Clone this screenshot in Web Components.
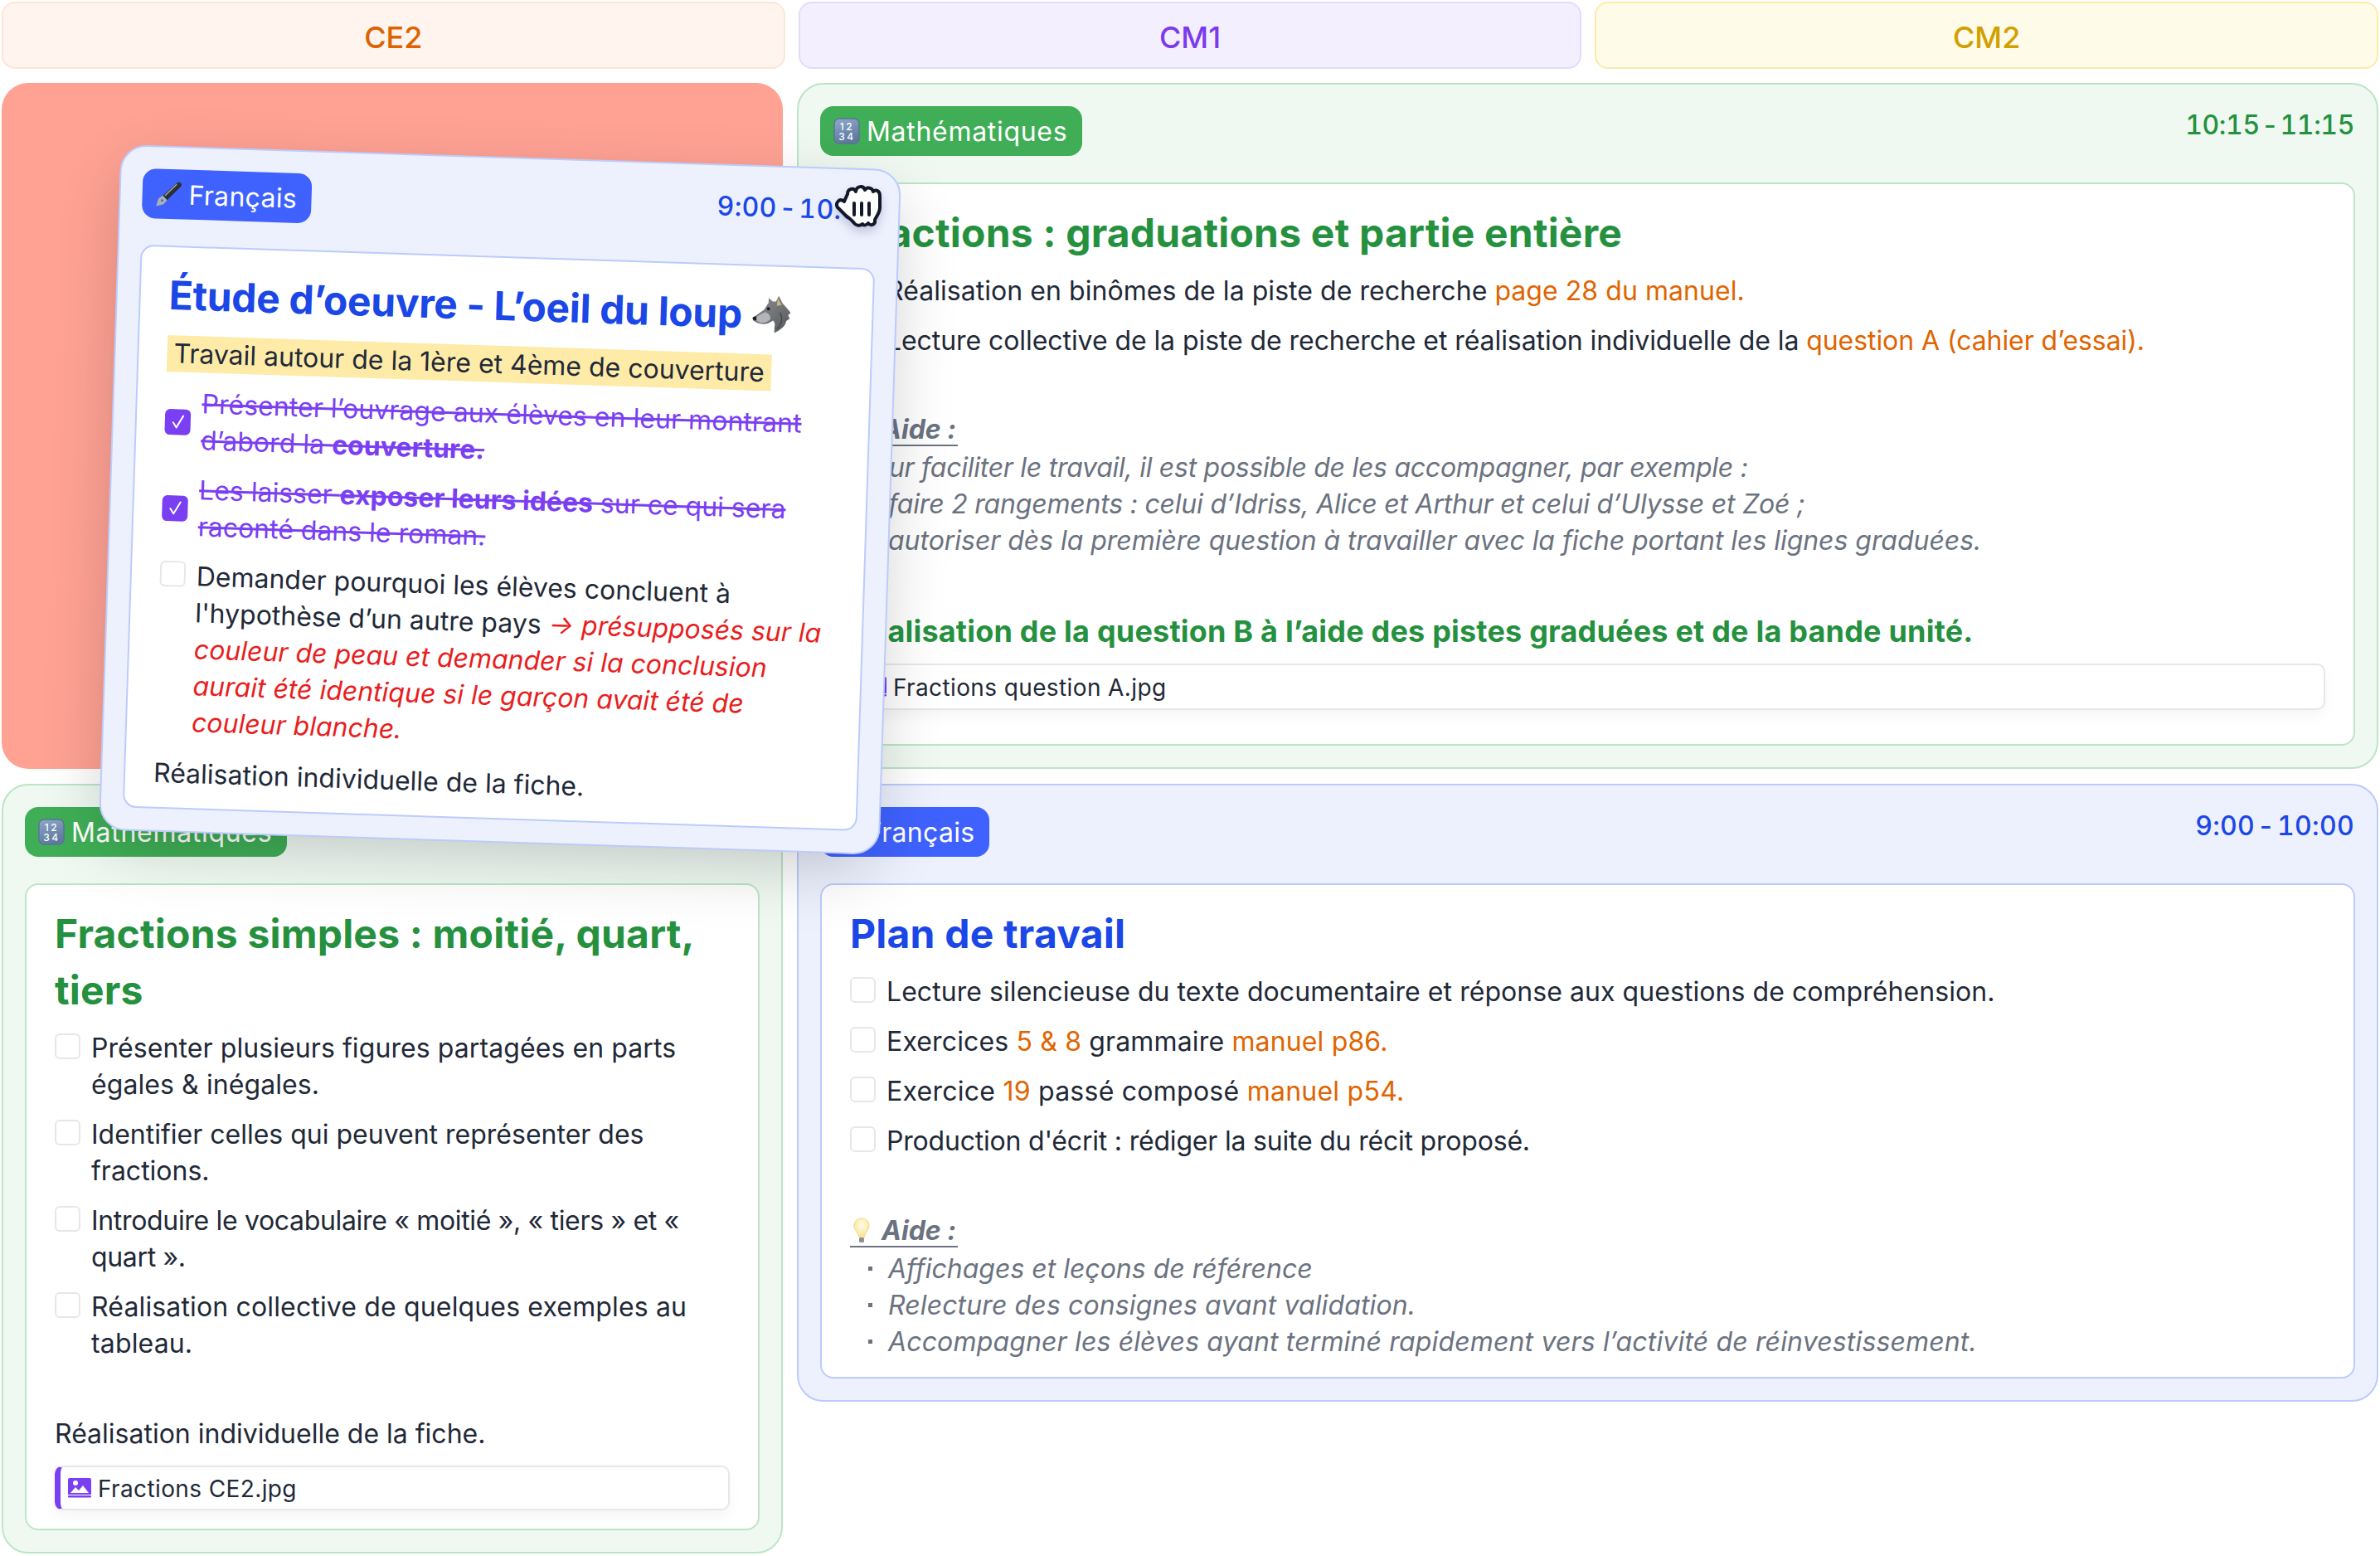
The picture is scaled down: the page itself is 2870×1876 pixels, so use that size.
<!doctype html>
<html lang="fr"><head><meta charset="utf-8"><title>Planning</title>
<style>
html,body{margin:0;background:#fff}
body{width:2870px;height:1876px;overflow:hidden;font:400 32px/44px Inter,"Liberation Sans",sans-serif;color:#1f2937}
</style></head><body>
<plan-board>
  <plan-heads>
    <plan-head tone="ce2">CE2</plan-head>
    <plan-head tone="cm1">CM1</plan-head>
    <plan-head tone="cm2">CM2</plan-head>
  </plan-heads>
  <plan-cols>
    <plan-col style="width:942px;flex:none">
      <plan-drop>
        <plan-lesson tone="blue" subject="Français" time="9:00 - 10:00" ghost>
          <plan-title tail="wolf" style="letter-spacing:-.34px">Étude d’oeuvre - L’oeil du loup</plan-title>
          <plan-mark>Travail autour de la 1ère et 4ème de couverture</plan-mark>
          <plan-item done style="letter-spacing:.05px">Présenter l’ouvrage aux élèves en leur montrant<br>d’abord la <b>couverture.</b></plan-item>
          <plan-item done>Les laisser <b>exposer leurs idées</b> sur ce qui sera<br>raconté dans le roman.</plan-item>
          <plan-item>Demander pourquoi les élèves concluent à<br>l'hypothèse d’un autre pays <plan-red>→ présupposés sur la<br>couleur de peau et demander si la conclusion<br>aurait été identique si le garçon avait été de<br>couleur blanche.</plan-red></plan-item>
          <plan-p style="margin-top:2px">Réalisation individuelle de la fiche.</plan-p>
        </plan-lesson>
        <plan-hand></plan-hand>
      </plan-drop>
      <plan-lesson tone="green" subject="Mathématiques" time="" style="height:928px;margin-top:1px">
        <plan-title>Fractions simples : moitié, quart,<br>tiers</plan-title>
        <plan-item style="letter-spacing:.08px">Présenter plusieurs figures partagées en parts<br>égales &amp; inégales.</plan-item>
        <plan-item>Identifier celles qui peuvent représenter des<br>fractions.</plan-item>
        <plan-item style="letter-spacing:-.33px">Introduire le vocabulaire « moitié », « tiers » et «<br>quart ».</plan-item>
        <plan-item style="letter-spacing:.15px">Réalisation collective de quelques exemples au<br>tableau.</plan-item>
        <plan-p style="margin-top:49px">Réalisation individuelle de la fiche.</plan-p>
        <plan-file>Fractions CE2.jpg</plan-file>
      </plan-lesson>
    </plan-col>
    <plan-col style="flex:1;min-width:0">
      <plan-lesson tone="green" subject="Mathématiques" time="10:15 - 11:15" style="height:827px">
        <plan-title>Fractions : graduations et partie entière</plan-title>
        <plan-item style="letter-spacing:.05px">Réalisation en binômes de la piste de recherche <plan-o>page 28 du manuel.</plan-o></plan-item>
        <plan-item style="letter-spacing:-.07px">Lecture collective de la piste de recherche et réalisation individuelle de la <plan-o>question A (cahier d’essai).</plan-o></plan-item>
        <plan-aide style="margin-top:49px">Aide :</plan-aide>
        <plan-note indent style="letter-spacing:-.27px">Pour faciliter le travail, il est possible de les accompagner, par exemple :</plan-note>
        <plan-note style="letter-spacing:-.2px">faire 2 rangements : celui d’Idriss, Alice et Arthur et celui d’Ulysse et Zoé ;</plan-note>
        <plan-note style="letter-spacing:-.04px">autoriser dès la première question à travailler avec la fiche portant les lignes graduées.</plan-note>
        <plan-sub>Réalisation de la question B à l’aide des pistes graduées et de la bande unité.</plan-sub>
        <plan-file>Fractions question A.jpg</plan-file>
      </plan-lesson>
      <plan-lesson tone="blue" subject="Français" time="9:00 - 10:00" style="height:745px;margin-top:1px">
        <plan-title>Plan de travail</plan-title>
        <plan-item style="letter-spacing:.06px">Lecture silencieuse du texte documentaire et réponse aux questions de compréhension.</plan-item>
        <plan-item style="letter-spacing:.15px">Exercices <plan-o>5 &amp; 8</plan-o> grammaire <plan-o>manuel p86.</plan-o></plan-item>
        <plan-item style="letter-spacing:.25px">Exercice <plan-o>19</plan-o> passé composé <plan-o>manuel p54.</plan-o></plan-item>
        <plan-item style="letter-spacing:-.2px">Production d'écrit : rédiger la suite du récit proposé.</plan-item>
        <plan-aide style="margin-top:50px">Aide :</plan-aide>
        <plan-note>Affichages et leçons de référence</plan-note>
        <plan-note style="letter-spacing:.12px">Relecture des consignes avant validation.</plan-note>
        <plan-note style="letter-spacing:.15px">Accompagner les élèves ayant terminé rapidement vers l’activité de réinvestissement.</plan-note>
      </plan-lesson>
    </plan-col>
  </plan-cols>
</plan-board>
<script>
let uid=0;
const ICONS={
 'Mathématiques':()=>{const g='n'+(++uid);return `<svg width="32" height="32" viewBox="0 0 32 32"><defs><linearGradient id="${g}" x1="0" y1="0" x2=".3" y2="1"><stop offset="0" stop-color="#8fa9cb"/><stop offset="1" stop-color="#5f7a9e"/></linearGradient></defs><rect x="1" y="1" width="30" height="30" rx="6" fill="url(#${g})" stroke="#5a7496" stroke-width="1.500"/><text x="16.500" y="14.500" text-anchor="middle" font-family="Inter" font-size="12" font-weight="500" letter-spacing="2.500" fill="#fff">12</text><text x="16.500" y="27" text-anchor="middle" font-family="Inter" font-size="12" font-weight="500" letter-spacing="2.500" fill="#fff">34</text></svg>`},
 'Français':()=>{const g='p'+(++uid);return `<svg width="32" height="32" viewBox="0 0 32 32"><defs><linearGradient id="${g}" x1="0" y1="0" x2="1" y2="1"><stop offset="0" stop-color="#7d8488"/><stop offset=".5" stop-color="#2c3134"/><stop offset="1" stop-color="#15181a"/></linearGradient></defs><path d="M26 1.500C29 0 32 3 30.500 6L14 23.500 8.500 18z" fill="url(#${g})"/><path d="M25 4 11.500 18" stroke="#aab0b4" stroke-width="1.200" fill="none"/><path d="M8.500 18 14 23.500 10 28.500 1 31 3.500 22z" fill="#a9b1b5"/><circle cx="8" cy="24" r="1.400" fill="#3a66b0"/></svg>`}
};
function el(name,css,html){
  customElements.define(name,class extends HTMLElement{
    connectedCallback(){
      if(this.shadowRoot)return;
      const r=this.attachShadow({mode:'open'});
      r.innerHTML=`<style>${css}</style>${typeof html==='function'?html(this):html}`;
    }
  });
}
el('plan-board',':host{display:flex;flex-direction:column;gap:17px;padding:2px 2px 0}','<slot></slot>');
el('plan-heads',':host{display:grid;grid-template-columns:repeat(3,1fr);gap:16px}','<slot></slot>');
el('plan-head',`:host{display:flex;align-items:center;justify-content:center;height:81px;box-sizing:border-box;padding-top:4px;border:2px solid;border-radius:16px;font-size:36px;font-weight:500}
:host([tone=ce2]){background:#fff4ee;border-color:#ffe5d5;color:#dd6200}
:host([tone=cm1]){background:#f3effe;border-color:#e3dbfd;color:#7c3aed}
:host([tone=cm2]){background:#fffbe9;border-color:#fdeaa9;color:#d29f00}`,'<slot></slot>');
el('plan-cols',':host{display:flex;gap:17px}','<slot></slot>');
el('plan-col',':host{display:flex;flex-direction:column;gap:17px}','<slot></slot>');
el('plan-drop',':host{display:block;position:relative;height:827px;background:#ffa294;border-radius:32px}','<slot></slot>');
el('plan-lesson',`:host{display:flex;flex-direction:column;box-sizing:border-box;border:2px solid var(--line);border-radius:32px;padding:26px;background:var(--bg)}
:host([tone=green]){--line:#bbe5c5;--bg:#eff9f2;--pill:#3fae56;--ink:#25913f}
:host([tone=blue]){--line:#bccbfc;--bg:#edf1fe;--pill:#3f62ff;--ink:#1a47e6}
:host([ghost]){position:absolute;inset:0;z-index:10;transform:translate(130px,89px) rotate(1.85deg);box-shadow:0 24px 80px -8px rgba(0,0,0,.2)}
:host([ghost]) .body{padding-top:24px}
:host([subject="Mathématiques"]) .pill{letter-spacing:.7px}
:host([tone=green]) .time{letter-spacing:-.4px}
.top{display:flex;justify-content:space-between;align-items:flex-start;height:60px;margin-bottom:32px}
.pill{display:flex;align-items:center;gap:8px;height:60px;padding:0 18px 0 16px;border-radius:16px;background:var(--pill);color:#fff;font-weight:400;letter-spacing:.3px}
.pill span{padding-top:2px}
.pill svg{display:block;flex:none}
.time{color:var(--ink);font-weight:500;font-variant-numeric:tabular-nums;letter-spacing:.3px;word-spacing:-6px;margin-right:1px;padding-top:1px}
.body{flex:1;min-height:0;display:flex;flex-direction:column;box-sizing:border-box;border:2px solid var(--line);border-radius:16px;background:#fff;padding:25px 34px 22px}`,
t=>{const s=t.getAttribute('subject');return `<div class="top"><div class="pill">${ICONS[s]?ICONS[s]():''}<span>${s}</span></div><div class="time">${t.getAttribute('time')}</div></div><div class="body"><slot></slot></div>`});
el('plan-title',`:host{display:block;white-space:nowrap;font-size:48px;line-height:68px;font-weight:700;color:var(--ink);margin-bottom:14px;letter-spacing:.2px}
svg{vertical-align:-6px;margin-left:13px}`,t=>`<slot></slot>${t.getAttribute('tail')==='wolf'?`<svg width="46" height="46" viewBox="0 0 46 46"><defs><linearGradient id="w" x1="0" y1="0" x2="1" y2="1"><stop offset="0" stop-color="#8f9195"/><stop offset="1" stop-color="#54565a"/></linearGradient></defs><path d="M1 27L14 17C17 12 18 10 19 9L19 3 24 7 28 7 31 0 36 9C40 13 45 18 46 20L43 23 45 27 41 30C40 37 34 41 27 45L27 38C28 34 27 32 25 30 21 33 15 36 9 34 6 34 3 32 1 30Z" fill="url(#w)"/><path d="M5 26 15 20C19 21 22 24 22 28 19 32 14 34 10 33 6 32 4 30 5 26Z" fill="#b2b4b7"/><path d="M30 3 35 11 29 12Z" fill="#cdb680"/><path d="M0 28C1 26 3 25 5 26L5 30 2 31Z" fill="#1d1e20"/><circle cx="19" cy="16" r="2" fill="#1d1e20"/><path d="M33 20C37 26 36 34 30 40" fill="none" stroke="#46484c" stroke-width="1.500"/></svg>`:''}`);
el('plan-sub',':host{display:block;white-space:nowrap;font-size:36px;line-height:46px;font-weight:700;color:var(--ink);letter-spacing:.2px;margin:64px 0 0}','<slot></slot>');
el('plan-mark',':host{display:block;white-space:nowrap;margin-bottom:16px}span{display:inline-block;padding:0 8px;background:#feeba8}','<span><slot></slot></span>');
el('plan-item',`:host{display:flex;gap:13px;white-space:nowrap;margin-bottom:16px}
.box{flex:none;box-sizing:border-box;width:31px;height:31px;margin-top:4px;border:2px solid #e5e7eb;border-radius:6px;background:#fff;display:flex;align-items:center;justify-content:center}
:host([done]){color:#7a3ff2;align-items:center;text-decoration:line-through}
:host([done]) .box{background:#7a3ff2;border-color:#7a3ff2;margin-top:0}
.txt{display:block}svg{display:block}`,
t=>`<div class="box">${t.hasAttribute('done')?'<svg width="18" height="20" viewBox="0 0 18 20"><path d="M3 11l4 6 8-14" fill="none" stroke="#fff" stroke-width="2" stroke-linecap="round" stroke-linejoin="round"/></svg>':''}</div><div class="txt"><slot></slot></div>`);
el('plan-p',':host{display:block;white-space:nowrap}','<slot></slot>');
el('plan-o',':host{color:#e06400}','<slot></slot>');
el('plan-red',':host{color:#e81e1e;font-style:italic}','<slot></slot>');
el('plan-aide',`:host{display:block;height:44px;white-space:nowrap;color:#6b7280;font-style:italic;font-weight:700}
.a{display:inline-flex;align-items:center;gap:10px;height:36px;margin-top:2px;border-bottom:2px solid #6b7280;padding-right:2px}svg{display:block}`,
`<div class="a"><svg width="28" height="32" viewBox="0 0 28 32"><defs><radialGradient id="b" cx=".5" cy=".35" r=".6"><stop offset="0" stop-color="#fffdf0"/><stop offset="1" stop-color="#fde58e"/></radialGradient></defs><path d="M14 1C7 1 5 6 5 10c0 5 5 8 6 14h6c1-6 6-9 6-14 0-4-2-9-9-9z" fill="url(#b)" stroke="#efd98c"/><rect x="11" y="24" width="6" height="6" rx="1.500" fill="#8b8f96"/></svg><slot></slot></div>`);
el('plan-note',`:host{display:flex;white-space:nowrap;color:#6b7280;font-style:italic;position:relative;padding-left:46px}
:host([indent]){padding-left:8px}
:host::before{content:"";position:absolute;left:22px;top:19px;width:5px;height:5px;background:#6b7280}
:host([indent])::before{display:none}`,'<slot></slot>');
el('plan-file',`:host{display:flex;align-items:center;gap:8px;height:56px;box-sizing:border-box;margin-top:16px;border:2px solid #e5e7eb;border-radius:10px;border-left:7px solid #7a3ff2;padding:2px 0 0 9px;background:#fff;font-size:28px;font-weight:400;letter-spacing:.38px;box-shadow:0 8px 16px rgba(0,0,0,.04);color:#1f2937}svg{display:block;flex:none;margin-top:-2px}`,
`<svg width="28" height="24" viewBox="0 0 28 24"><path d="M2 0h24a2 2 0 0 1 2 2v18H0V2a2 2 0 0 1 2-2z" fill="#7a3ff2"/><circle cx="9" cy="6" r="3" fill="#fff"/><path d="M3 18l6-7 4 4 5-6 7 9z" fill="#fff"/><rect y="21" width="28" height="2.500" rx="1" fill="#7a3ff2"/></svg><slot></slot>`);
el('plan-hand',`:host{position:absolute;left:1005px;top:123px;z-index:11;width:56px;height:52px;filter:drop-shadow(0 6px 6px rgba(30,40,90,.22))}svg{display:block}`,
`<svg width="56" height="52" viewBox="0 0 56 52"><path d="M15 11C15 4 23 3 25 8 26 1 34 0 36 6 38 2 45 3 46 8 49 5 54 7 54 13V27C54 34 50 37 48 42V45C46 49 42 49 40 46 38 49 34 49 33 47 30 50 25 49 23 46 20 42 16 39 12 36L3 27C0 22 5 15 11 20Z" fill="#fff" stroke="#111827" stroke-width="4" stroke-linejoin="round"/><path d="M23 22V36M32 22V36M41 22V36" stroke="#111827" stroke-width="4" stroke-linecap="round"/></svg>`);
</script>
</body></html>
